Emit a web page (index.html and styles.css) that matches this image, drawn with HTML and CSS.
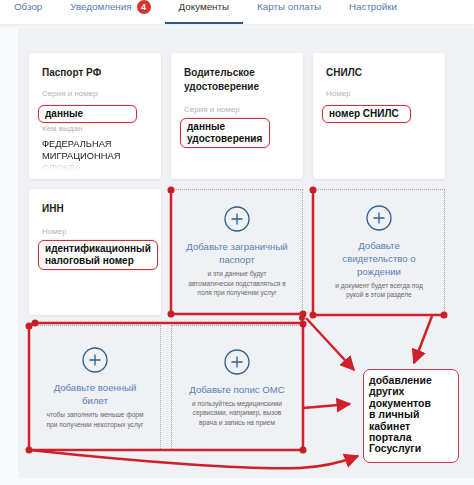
FILE: index.html
```html
<!DOCTYPE html>
<html>
	<head>
		<meta charset="UTF-8">
		<title>Документы</title>
		<link rel="stylesheet" href="styles.css">
	</head>
	<body>
		<div class="tabs">
			<a class="tab">Обзор</a>
			<a class="tab">Уведомления<span class="badge">4</span></a>
			<a class="tab tab-active">Документы</a>
			<a class="tab">Карты оплаты</a>
			<a class="tab">Настройки</a>
		</div>

		<div class="docs">
			<!-- заполненные документы -->
			<div class="card">
				<div class="card-title">Паспорт РФ</div>
				<div class="card-label">Серия и номер</div>
				<div class="card-value value-passport">данные</div>
				<div class="card-label card-label-tight">Кем выдан</div>
				<div class="card-issuer">ФЕДЕРАЛЬНАЯ<br>МИГРАЦИОННАЯ<br>СЛУЖБА</div>
			</div>
			<div class="card">
				<div class="card-title">Водительское<br>удостоверение</div>
				<div class="card-label card-label-loose">Серия и номер</div>
				<div class="card-value card-value-tall value-license">данные<br>удостоверения</div>
			</div>
			<div class="card">
				<div class="card-title">СНИЛС</div>
				<div class="card-label">Номер</div>
				<div class="card-value value-snils">номер СНИЛС</div>
			</div>
			<div class="card">
				<div class="card-title">ИНН</div>
				<div class="card-label card-label-loose">Номер</div>
				<div class="card-value card-value-tall value-inn">идентификационный<br>налоговый номер</div>
			</div>

			<!-- пустые слоты -->
			<div class="add-card">
				<svg class="add-icon" width="26" height="26" viewBox="0 0 26 26"><circle cx="13" cy="13" r="12"/><path d="M13 7.5v11M7.5 13h11"/></svg>
				<div class="add-title">Добавьте заграничный<br>паспорт</div>
				<div class="add-text">и эти данные будут<br>автоматически подставляться в<br>поля при получении услуг</div>
			</div>
			<div class="add-card">
				<svg class="add-icon" width="26" height="26" viewBox="0 0 26 26"><circle cx="13" cy="13" r="12"/><path d="M13 7.5v11M7.5 13h11"/></svg>
				<div class="add-title">Добавьте<br>свидетельство о<br>рождении</div>
				<div class="add-text">и документ будет всегда под<br>рукой в этом разделе</div>
			</div>
			<div class="add-card add-card-joined-left">
				<svg class="add-icon" width="26" height="26" viewBox="0 0 26 26"><circle cx="13" cy="13" r="12"/><path d="M13 7.5v11M7.5 13h11"/></svg>
				<div class="add-title">Добавьте военный<br>билет</div>
				<div class="add-text">чтобы заполнить меньше форм<br>при получении некоторых услуг</div>
			</div>
			<div class="add-card">
				<svg class="add-icon" width="26" height="26" viewBox="0 0 26 26"><circle cx="13" cy="13" r="12"/><path d="M13 7.5v11M7.5 13h11"/></svg>
				<div class="add-title">Добавьте полис ОМС</div>
				<div class="add-text">и пользуйтесь медицинскими<br>сервисами, например, вызов<br>врача и запись на прием</div>
			</div>
		</div>

		<!-- пометки красным поверх страницы -->
		<svg class="marks" width="474" height="485" viewBox="0 0 474 485">
			<defs>
				<marker id="head" viewBox="0 0 10 10" refX="9" refY="5" markerWidth="6" markerHeight="6" orient="auto">
					<path d="M0 0L10 5L0 10z" fill="#d0212b"/>
				</marker>
			</defs>
			<g class="mark-line">
				<path d="M171 190V314H303"/>
				<path d="M313 190V315H444"/>
				<path d="M29 325L35 323H303V450H29Z"/>
				<path d="M306 318L354 370" marker-end="url(#head)"/>
				<path d="M432 316L414 363" marker-end="url(#head)"/>
				<path d="M303 408L350 404" marker-end="url(#head)"/>
				<path d="M30 450C140 462 250 470 300 468C325 467 342 462 358 456" marker-end="url(#head)"/>
			</g>
			<g class="mark-dot">
				<circle cx="171" cy="190" r="3.5"/>
				<circle cx="171" cy="314" r="3.5"/>
				<circle cx="303" cy="314" r="3.5"/>
				<circle cx="313" cy="190" r="3.5"/>
				<circle cx="313" cy="315" r="3.5"/>
				<circle cx="444" cy="315" r="3.5"/>
				<circle cx="29" cy="326" r="3.5"/>
				<circle cx="35" cy="323" r="3.5"/>
				<circle cx="303" cy="324" r="3.5"/>
				<circle cx="303" cy="450" r="3.5"/>
				<circle cx="29" cy="450" r="3.5"/>
				<circle cx="302" cy="318" r="3"/>
			</g>
		</svg>

		<div class="note">добавление<br>других<br>документов<br>в личный<br>кабинет<br>портала<br>Госуслуги</div>
	</body>
</html>
```

FILE: styles.css
```css
html,body{
	margin: 0;
	padding: 0;
}
body{
	width: 474px;
	height: 485px;
	overflow: hidden;
	position: relative;
	background: #f8f9fb;
	font-family: "Liberation Sans", Arial, sans-serif;
	color: #222;
}

/* вкладки */
.tabs{
	display: flex;
	height: 24px;
	background: #fff;
	box-shadow: 0 2px 3px rgba(0,0,0,.06);
	position: relative;
	z-index: 1;
}
.tab{
	box-sizing: border-box;
	height: 24px;
	padding: 0 14px;
	font-size: 9.8px;
	line-height: 14px;
	color: #4f7bb2;
	white-space: nowrap;
}
.tab-active{
	color: #333;
	border-bottom: 2.5px solid #2b5a88;
}
.badge{
	display: inline-block;
	width: 14px;
	height: 14px;
	margin-left: 5px;
	border-radius: 50%;
	background: #d8322f;
	color: #fff;
	font-size: 9px;
	font-weight: bold;
	line-height: 14px;
	text-align: center;
	vertical-align: top;
}

/* сетка документов */
.docs{
	box-sizing: border-box;
	display: grid;
	grid-template-columns: repeat(3, 132px);
	grid-auto-rows: 126px;
	gap: 10px;
	width: 456px;
	margin: 4px 0 0 18px;
	padding: 25px 11px 27px;
	background: #eff1f4;
}
.card{
	box-sizing: border-box;
	padding: 13px 13px 0;
	background: #fff;
	border-radius: 3px;
	box-shadow: 0 1px 3px rgba(0,0,0,.07);
	overflow: hidden;
}
.card-title{
	font-size: 10px;
	font-weight: bold;
	line-height: 14px;
	color: #1d1d1d;
}
.card-label{
	margin-top: 9px;
	font-size: 8px;
	line-height: 10px;
	color: #b3b3b3;
}
.card-label-loose{
	margin-top: 11px;
}
.card-label-tight{
	margin-top: 1px;
}
.card-value{
	box-sizing: border-box;
	margin: 6px 0 0 -4px;
	padding: 2px 6px;
	border: 1.5px solid #c9333d;
	border-radius: 6px;
	box-shadow: 0 0 2px rgba(200,50,60,.35);
	font-size: 10px;
	font-weight: bold;
	line-height: 12px;
	color: #111;
	white-space: nowrap;
}
.card-value-tall{
	margin-top: 3px;
}
.value-passport{ width: 99px; }
.value-license{ width: 90px; }
.value-snils{ width: 89px; }
.value-inn{ width: 120px; }
.card-issuer{
	margin-top: 4px;
	font-size: 9.3px;
	line-height: 12px;
	color: #222;
	-webkit-mask-image: linear-gradient(#000 62%, rgba(0,0,0,.15) 78%, transparent 95%);
	mask-image: linear-gradient(#000 62%, rgba(0,0,0,.15) 78%, transparent 95%);
}

/* пустые слоты */
.add-card{
	box-sizing: border-box;
	display: flex;
	flex-direction: column;
	align-items: center;
	justify-content: center;
	border: 1px dotted #8fb0d2;
	background: #eff1f4;
	text-align: center;
}
.add-icon{
	fill: none;
	stroke: #2e5e8c;
	stroke-width: 1.3;
}
.add-title{
	margin-top: 8px;
	font-size: 9.6px;
	line-height: 13px;
	color: #5b80b4;
	white-space: nowrap;
}
.add-text{
	margin-top: 3px;
	font-size: 6.6px;
	line-height: 9.5px;
	color: #6a6a6a;
	white-space: nowrap;
}

/* пометки */
.marks{
	position: absolute;
	top: 0;
	left: 0;
	pointer-events: none;
}
.mark-line path{
	fill: none;
	stroke: #d0212b;
	stroke-width: 2.5;
	stroke-linejoin: round;
}
.mark-dot circle{
	fill: #c81e28;
}
.note{
	position: absolute;
	left: 363px;
	top: 369px;
	box-sizing: border-box;
	width: 96px;
	height: 94px;
	padding: 5px 5px;
	border: 1.5px solid #cf3a40;
	border-radius: 7px;
	background: #fff;
	font-size: 10.5px;
	font-weight: bold;
	line-height: 11.4px;
	color: #111;
}
```
